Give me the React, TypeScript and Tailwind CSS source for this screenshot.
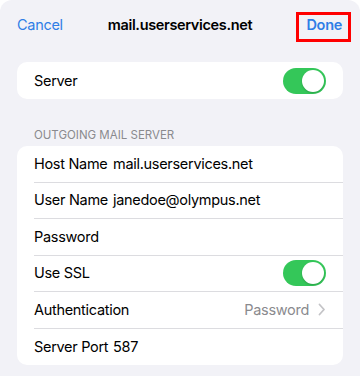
import React from "react";

function Toggle() {
  return (
    <div className="w-[43px] h-[26px] rounded-full bg-[#34c759] flex items-center justify-end px-[2px]">
      <div className="w-[22px] h-[22px] rounded-full bg-white shadow-[0_1px_2px_rgba(0,0,0,0.2)]" />
    </div>
  );
}

function Row({
  label,
  value,
  right,
  last,
}: {
  label: string;
  value?: string;
  right?: React.ReactNode;
  last?: boolean;
}) {
  return (
    <div className="pl-[17px]">
      <div
        className={`h-[36.5px] flex items-center pr-[17px] whitespace-nowrap ${
          last ? "" : "border-b border-[#dcdce0]"
        }`}
      >
        {value !== undefined ? (
          <>
            <span className="w-[79px] shrink-0">{label}</span>
            <span>{value}</span>
          </>
        ) : (
          <span>{label}</span>
        )}
        {right && <div className="ml-auto flex items-center">{right}</div>}
      </div>
    </div>
  );
}

export default function App() {
  return (
    <div
      className="w-[360px] h-[376px] bg-white text-[14.5px] tracking-[-0.3px] text-black"
      style={{ fontFamily: "Inter, 'Liberation Sans', sans-serif" }}
    >
      <div className="w-full h-full bg-[#f2f2f7] rounded-t-[12px] overflow-hidden">
        <div className="relative h-[50px] flex items-center px-[17px] whitespace-nowrap">
          <span className="text-[#2f7ee6]">Cancel</span>
          <span className="absolute left-0 right-0 text-center font-semibold text-[14.5px] tracking-[-0.35px] pointer-events-none">
            mail.userservices.net
          </span>
          <span className="ml-auto text-[#2f7ee6] font-semibold mr-[1px]">Done</span>
          <div className="absolute left-[296px] top-[12px] w-[55px] h-[30px] border-[3px] border-[#ff0000]" />
        </div>
        <div className="mx-[17px] mt-[12px] bg-white rounded-[10px] h-[37px] flex items-center pl-[17px] pr-[17px]">
          <span>Server</span>
          <div className="ml-auto">
            <Toggle />
          </div>
        </div>
        <div className="mt-[28px] px-[34px] text-[11.5px] text-[#8a8a8e] uppercase leading-[16px] tracking-[0px] whitespace-nowrap">
          Outgoing Mail Server
        </div>
        <div className="mx-[17px] mt-[3px] bg-white rounded-[10px] overflow-hidden">
          <Row label="Host Name" value="mail.userservices.net" />
          <Row label="User Name" value="janedoe@olympus.net" />
          <Row label="Password" />
          <Row label="Use SSL" right={<Toggle />} />
          <Row
            label="Authentication"
            right={
              <span className="flex items-center gap-[9px] text-[#8a8a8e]">
                Password
                <svg width="8" height="13" viewBox="0 0 8 13" fill="none">
                  <path
                    d="M1.5 1.5L6 6.5L1.5 11.5"
                    stroke="#c4c4c7"
                    strokeWidth="1.8"
                    strokeLinecap="round"
                    strokeLinejoin="round"
                  />
                </svg>
              </span>
            }
          />
          <Row label="Server Port" value="587" last />
        </div>
      </div>
    </div>
  );
}
